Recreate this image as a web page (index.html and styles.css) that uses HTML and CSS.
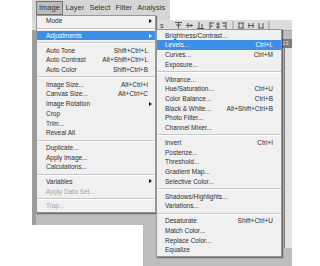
FILE: index.html
```html
<!DOCTYPE html>
<html lang="en">
<head>
    <meta charset="UTF-8">
    <title>Image menu</title>
    <link rel="stylesheet" href="styles.css">
</head>
<body>
<div id="shot">
    <div id="ps">
        <div id="menubar">
            <span class="top-item active">Image</span>
            <span class="top-item">Layer</span>
            <span class="top-item">Select</span>
            <span class="top-item">Filter</span>
            <span class="top-item">Analysis</span>
            <span class="top-item">3D</span>
        </div>
        <div id="optbar">
            <span class="opt-label">s</span>
            <svg class="opt-icons" width="120" height="9" viewBox="0 0 120 9">
                <g fill="none" stroke="#555" stroke-width="1">
                    <path d="M19 1.5h7M22.5 1.5v6M20 4h2M23 4h2"/>
                    <path d="M30 4.5h7M32 2v5M35 3v3"/>
                    <path d="M41 7.5h7M43 1v6M46 3v4"/>
                    <path d="M54 1v7M54 2h4M54 5h3"/>
                    <path d="M62 1v7M60 3h4M60 6h4"/>
                    <path d="M70 1v7M66 2h4M67 5h3"/>
                    <path d="M77 0v9" stroke="#999"/>
                    <path d="M82 2h6M83 2v5M87 2v5M82 7h6"/>
                    <path d="M92 4.5h6M93 2v5M97 2v5"/>
                    <path d="M102 7h6M103 2v5M107 2v5"/>
                    <path d="M113 0v9" stroke="#999"/>
                </g>
            </svg>
        </div>
        <div id="tools"></div>
        <div id="doc">
            <div id="doc-tab">13</div>
            <div id="doc-ruler"></div>
        </div>
    </div>

    <div class="menu" id="image-menu">
        <div class="item"><span class="label">Mode</span><span class="arrow"></span></div>
        <div class="sep"></div>
        <div class="item hot"><span class="label">Adjustments</span><span class="arrow"></span></div>
        <div class="sep"></div>
        <div class="item"><span class="label">Auto Tone</span><span class="key">Shift+Ctrl+L</span></div>
        <div class="item"><span class="label">Auto Contrast</span><span class="key">Alt+Shift+Ctrl+L</span></div>
        <div class="item"><span class="label">Auto Color</span><span class="key">Shift+Ctrl+B</span></div>
        <div class="sep"></div>
        <div class="item"><span class="label">Image Size...</span><span class="key">Alt+Ctrl+I</span></div>
        <div class="item"><span class="label">Canvas Size...</span><span class="key">Alt+Ctrl+C</span></div>
        <div class="item"><span class="label">Image Rotation</span><span class="arrow"></span></div>
        <div class="item"><span class="label">Crop</span></div>
        <div class="item"><span class="label">Trim...</span></div>
        <div class="item"><span class="label">Reveal All</span></div>
        <div class="sep"></div>
        <div class="item"><span class="label">Duplicate...</span></div>
        <div class="item"><span class="label">Apply Image...</span></div>
        <div class="item"><span class="label">Calculations...</span></div>
        <div class="sep"></div>
        <div class="item"><span class="label">Variables</span><span class="arrow"></span></div>
        <div class="item off"><span class="label">Apply Data Set...</span></div>
        <div class="sep"></div>
        <div class="item off"><span class="label">Trap...</span></div>
    </div>

    <div class="menu" id="sub-menu">
        <div class="item"><span class="label">Brightness/Contrast...</span></div>
        <div class="item hot"><span class="label">Levels...</span><span class="key">Ctrl+L</span></div>
        <div class="item"><span class="label">Curves...</span><span class="key">Ctrl+M</span></div>
        <div class="item"><span class="label">Exposure...</span></div>
        <div class="sep"></div>
        <div class="item"><span class="label">Vibrance...</span></div>
        <div class="item"><span class="label">Hue/Saturation...</span><span class="key">Ctrl+U</span></div>
        <div class="item"><span class="label">Color Balance...</span><span class="key">Ctrl+B</span></div>
        <div class="item"><span class="label">Black &amp; White...</span><span class="key">Alt+Shift+Ctrl+B</span></div>
        <div class="item"><span class="label">Photo Filter...</span></div>
        <div class="item"><span class="label">Channel Mixer...</span></div>
        <div class="sep"></div>
        <div class="item"><span class="label">Invert</span><span class="key">Ctrl+I</span></div>
        <div class="item"><span class="label">Posterize...</span></div>
        <div class="item"><span class="label">Threshold...</span></div>
        <div class="item"><span class="label">Gradient Map...</span></div>
        <div class="item"><span class="label">Selective Color...</span></div>
        <div class="sep"></div>
        <div class="item"><span class="label">Shadows/Highlights...</span></div>
        <div class="item"><span class="label">Variations...</span></div>
        <div class="sep"></div>
        <div class="item"><span class="label">Desaturate</span><span class="key">Shift+Ctrl+U</span></div>
        <div class="item"><span class="label">Match Color...</span></div>
        <div class="item"><span class="label">Replace Color...</span></div>
        <div class="item"><span class="label">Equalize</span></div>
    </div>
</div>
</body>
</html>
```

FILE: styles.css
```css
:root {
    --work-color: #bdbdbd;
    --bar-color: #d5d5d5;
    --menu-color: #f0f0f0;
    --hot-color: #3b8eea;
    --text-color: #2e2e2e;
    --off-color: #a3a3a3;
}

body {
    margin: 0;
    background-color: #fff;
    font-family: 'Liberation Sans', Arial, sans-serif;
}

#shot {
    position: relative;
    width: 320px;
    height: 266px;
    overflow: hidden;
}

/* the photoshop window, cut to the shape of the capture */
#ps {
    margin-left: 32px;
    width: 260px;
    height: 266px;
    background-color: var(--work-color);
    display: flex;
    flex-direction: column;
    clip-path: polygon(0 0, 138px 0, 138px 20px, 260px 20px, 260px 266px, 111px 266px, 111px 225px, 0 225px);
}

#menubar {
    display: flex;
    align-items: center;
    height: 20px;
    padding: 0 0 5px 4px;
    box-sizing: border-box;
    background-color: var(--bar-color);
    font-size: 7.5px;
    color: #333;
}

.top-item {
    padding: 0 1.6px;
    height: 12px;
    line-height: 12px;
    border: 1px solid transparent;
}

.top-item.active {
    padding: 0 2px;
    background-color: #bcbcbc;
    border-color: #737373;
}

#optbar {
    display: flex;
    align-items: center;
    height: 10px;
    background-color: #dcdcdc;
    border-bottom: 1px solid #a8a8a8;
}

.opt-label {
    margin-left: 128px;
    font-size: 7px;
    color: #333;
}

.opt-icons {
    margin-left: -8px;
}

#tools {
    position: absolute;
    top: 31px;
    left: 32px;
    width: 4px;
    height: 194px;
    background-color: #9d9d9d;
}

#doc {
    flex-grow: 1;
    display: flex;
    flex-direction: column;
    align-items: flex-end;
    padding-top: 8px;
}

#doc-tab {
    width: 10px;
    height: 9px;
    background-color: #7b7b7b;
    color: #e8e8e8;
    font-size: 6px;
    line-height: 9px;
}

#doc-ruler {
    width: 7px;
    height: 200px;
    background-color: #e4e4e4;
    border-left: 1px solid #7b7b7b;
}

.menu {
    position: absolute;
    box-sizing: border-box;
    background-color: var(--menu-color);
    border: 1px solid #979797;
    box-shadow: 1px 1px 1px rgba(0, 0, 0, 0.45);
    font-size: 6.5px;
    color: var(--text-color);
}

#image-menu {
    top: 15px;
    left: 36px;
    width: 120px;
    padding-bottom: 1px;
}

#sub-menu {
    top: 29px;
    left: 156px;
    width: 126px;
    padding-top: 0.2px;
    padding-bottom: 1px;
}

.item {
    display: flex;
    align-items: center;
    height: 9.7px;
    padding: 0 7px 0 9px;
    white-space: nowrap;
}

#sub-menu .item {
    padding: 0 8px 0 8px;
}

.label {
    flex-grow: 1;
}

.item.hot {
    background-color: var(--hot-color);
    color: #fff;
}

.item.off {
    color: var(--off-color);
}

.arrow {
    width: 0;
    height: 0;
    margin-right: -4px;
    border-left: 3px solid #111;
    border-top: 2px solid transparent;
    border-bottom: 2px solid transparent;
}

.item.hot .arrow {
    border-left-color: #fff;
}

.sep {
    height: 1px;
    margin: 2px 0 1px;
    background-color: #c6c6c6;
    border-bottom: 1px solid #fff;
}

#sub-menu .sep {
    margin-bottom: 1.25px;
}
```
